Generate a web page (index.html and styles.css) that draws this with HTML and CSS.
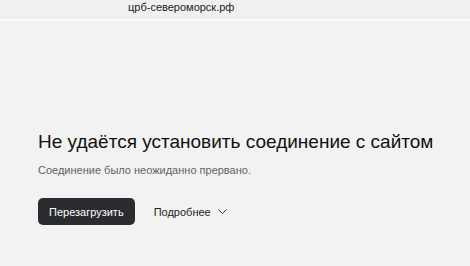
FILE: index.html
```html
<!DOCTYPE html>
<html lang="ru">
<head>
    <meta charset="UTF-8">
    <title>Не удаётся установить соединение с сайтом</title>
    <link rel="stylesheet" href="styles.css">
</head>
<body>
<div class="address-bar">
    <span class="host">црб-североморск.рф</span>
</div>
<main class="error-page">
    <h1>Не удаётся установить соединение с сайтом</h1>
    <p class="description">Соединение было неожиданно прервано.</p>
    <div class="actions">
        <button class="btn-reload">Перезагрузить</button>
        <button class="btn-details">Подробнее
            <svg width="9" height="5" viewBox="0 0 9 5"><path d="M0.5 0.5l4 4 4-4" fill="none" stroke="#333" stroke-width="1"/></svg>
        </button>
    </div>
</main>
</body>
</html>
```
FILE: styles.css
```css
/* CSS styles */
body {
    margin: 0;
    background-color: #f2f2f2;
    font-family: "Liberation Sans", Arial, sans-serif;
    color: #111;
}
.address-bar {
    height: 19px;
    background-color: #f0f0f0;
    border-bottom: 2px solid #fafafa;
    padding-left: 128px;
    overflow: hidden;
}
.host {
    display: block;
    padding-top: 1px;
    font-size: 11px;
    line-height: 13px;
    color: #222;
}
.error-page {
    padding: 107px 0 0 38px;
}
.error-page h1 {
    margin: 0;
    font-size: 19px;
    font-weight: normal;
    line-height: 28px;
}
.description {
    margin: 8px 0 0;
    font-size: 11px;
    color: #5f6368;
}
.actions {
    display: flex;
    align-items: center;
    margin-top: 22px;
}
.btn-reload {
    background-color: #2b2b30;
    color: #fff;
    border: none;
    border-radius: 5px;
    height: 27px;
    padding: 0 11px;
    font-family: inherit;
    font-size: 11px;
}
.btn-details {
    display: flex;
    align-items: center;
    gap: 7px;
    margin-left: 19px;
    background: none;
    border: none;
    padding: 0;
    font-family: inherit;
    font-size: 11px;
    color: #222;
}
```
